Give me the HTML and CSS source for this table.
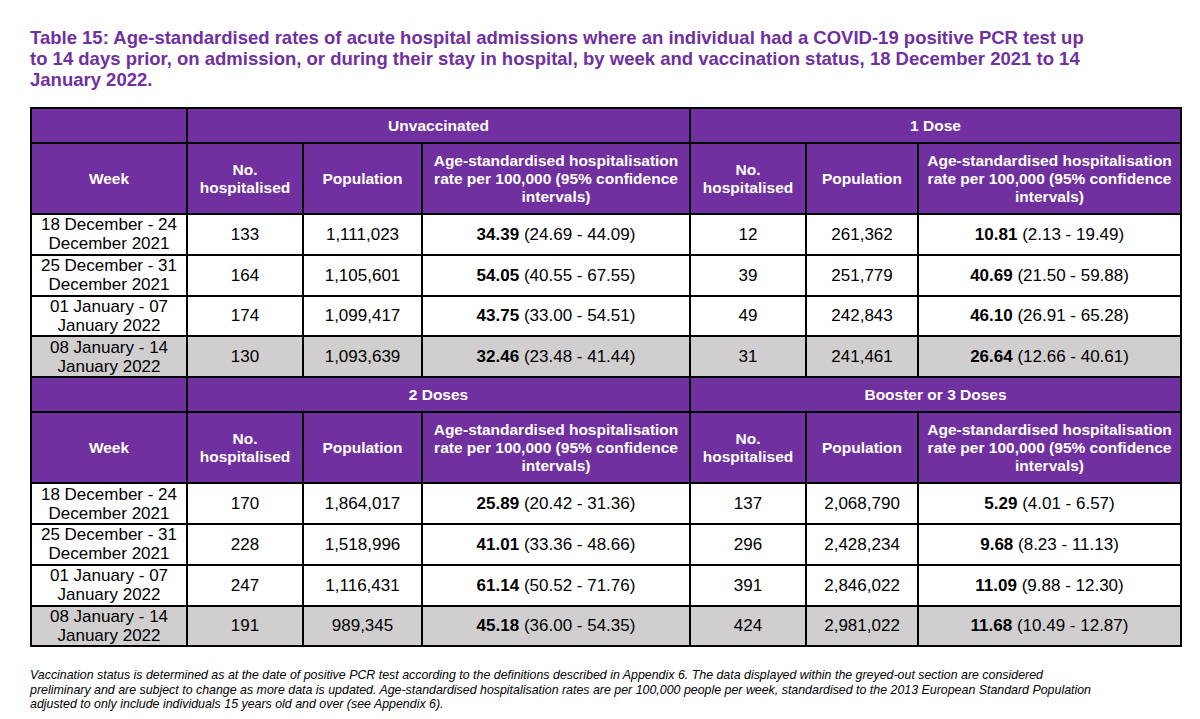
FILE: index.html
```html
<!DOCTYPE html>
<html lang="en">
<head>
<meta charset="utf-8">
<title>Table 15</title>
<link rel="stylesheet" href="styles.css">
</head>
<body>
<div class="page">
  <h1 class="title">Table 15: Age-standardised rates of acute hospital admissions where an individual had a COVID-19 positive PCR test up to 14 days prior, on admission, or during their stay in hospital, by week and vaccination status, 18 December 2021 to 14 January 2022.</h1>
  <table class="data">
    <colgroup>
      <col class="c-week"><col class="c-no"><col class="c-pop"><col class="c-rate">
      <col class="c-no2"><col class="c-pop2"><col class="c-rate2">
    </colgroup>
    <tbody>
      <tr class="grp"><th></th><th colspan="3">Unvaccinated</th><th colspan="3">1 Dose</th></tr>
      <tr class="hdr"><th>Week</th><th>No.<br>hospitalised</th><th>Population</th><th>Age-standardised hospitalisation rate per 100,000 (95% confidence intervals)</th><th>No.<br>hospitalised</th><th>Population</th><th>Age-standardised hospitalisation rate per 100,000 (95% confidence intervals)</th></tr>
      <tr class="row"><td>18 December - 24 December 2021</td><td>133</td><td>1,111,023</td><td><b>34.39</b> (24.69 - 44.09)</td><td>12</td><td>261,362</td><td><b>10.81</b> (2.13 - 19.49)</td></tr>
      <tr class="row"><td>25 December - 31 December 2021</td><td>164</td><td>1,105,601</td><td><b>54.05</b> (40.55 - 67.55)</td><td>39</td><td>251,779</td><td><b>40.69</b> (21.50 - 59.88)</td></tr>
      <tr class="row"><td>01 January - 07 January 2022</td><td>174</td><td>1,099,417</td><td><b>43.75</b> (33.00 - 54.51)</td><td>49</td><td>242,843</td><td><b>46.10</b> (26.91 - 65.28)</td></tr>
      <tr class="row grey"><td>08 January - 14 January 2022</td><td>130</td><td>1,093,639</td><td><b>32.46</b> (23.48 - 41.44)</td><td>31</td><td>241,461</td><td><b>26.64</b> (12.66 - 40.61)</td></tr>
      <tr class="grp"><th></th><th colspan="3">2 Doses</th><th colspan="3">Booster or 3 Doses</th></tr>
      <tr class="hdr"><th>Week</th><th>No.<br>hospitalised</th><th>Population</th><th>Age-standardised hospitalisation rate per 100,000 (95% confidence intervals)</th><th>No.<br>hospitalised</th><th>Population</th><th>Age-standardised hospitalisation rate per 100,000 (95% confidence intervals)</th></tr>
      <tr class="row"><td>18 December - 24 December 2021</td><td>170</td><td>1,864,017</td><td><b>25.89</b> (20.42 - 31.36)</td><td>137</td><td>2,068,790</td><td><b>5.29</b> (4.01 - 6.57)</td></tr>
      <tr class="row"><td>25 December - 31 December 2021</td><td>228</td><td>1,518,996</td><td><b>41.01</b> (33.36 - 48.66)</td><td>296</td><td>2,428,234</td><td><b>9.68</b> (8.23 - 11.13)</td></tr>
      <tr class="row"><td>01 January - 07 January 2022</td><td>247</td><td>1,116,431</td><td><b>61.14</b> (50.52 - 71.76)</td><td>391</td><td>2,846,022</td><td><b>11.09</b> (9.88 - 12.30)</td></tr>
      <tr class="row grey"><td>08 January - 14 January 2022</td><td>191</td><td>989,345</td><td><b>45.18</b> (36.00 - 54.35)</td><td>424</td><td>2,981,022</td><td><b>11.68</b> (10.49 - 12.87)</td></tr>
    </tbody>
  </table>
  <p class="note">Vaccination status is determined as at the date of positive PCR test according to the definitions described in Appendix 6. The data displayed within the greyed-out section are considered<br>preliminary and are subject to change as more data is updated. Age-standardised hospitalisation rates are per 100,000 people per week, standardised to the 2013 European Standard Population<br>adjusted to only include individuals 15 years old and over (see Appendix 6).</p>
</div>
</body>
</html>
```

FILE: styles.css
```css
html, body {
  margin: 0;
  padding: 0;
  background: #ffffff;
}

.page {
  padding: 27px 10px 0 30px;
  font-family: "Liberation Sans", Arial, sans-serif;
  color: #000;
}

.title {
  margin: 0 0 17px 0;
  font-size: 18.5px;
  line-height: 21px;
  font-weight: bold;
  color: #7030a0;
  width: 1072px;
}

.data {
  border-collapse: collapse;
  table-layout: fixed;
  width: 1151px;
  border: 2px solid #000;
}

.c-week { width: 156px; }
.c-no { width: 116px; }
.c-pop { width: 119px; }
.c-rate { width: 268px; }
.c-no2 { width: 116px; }
.c-pop2 { width: 112px; }
.c-rate2 { width: 263px; }

.data th,
.data td {
  border: 2px solid #000;
  text-align: center;
  vertical-align: middle;
  padding: 0 4px;
}

.data th {
  background: #7030a0;
  color: #fff;
  font-weight: bold;
  font-size: 15.5px;
  line-height: 18px;
}

.grp th { height: 33px; }
.hdr th { height: 69px; }

.data td {
  font-size: 17px;
  line-height: 19px;
  height: 38.8px;
  padding: 0 2px;
}

.data td b { font-weight: bold; }

.grey td { background: #d0cece; }

.note {
  margin: 21px 0 0 0;
  font-size: 12.4px;
  line-height: 14.5px;
  font-style: italic;
  color: #000;
  white-space: nowrap;
}
```
